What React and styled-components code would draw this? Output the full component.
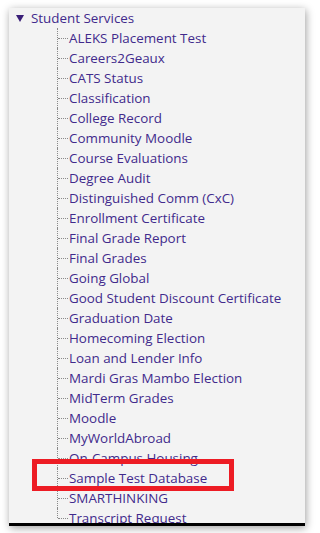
import React from "react";
import styled, { createGlobalStyle } from "styled-components";

const Global = createGlobalStyle`
  html, body { margin: 0; padding: 0; background: #ffffff; }
  body { font-family: "Open Sans", "Noto Sans", sans-serif; }
`;

const Page = styled.div`
  padding: 8px 8px 7px 9px;
  width: 313px;
  height: 533px;
  box-sizing: border-box;
`;

const Panel = styled.div`
  position: relative;
  width: 296px;
  height: 518px;
  box-sizing: border-box;
  background: #f3f3f3;
  border-bottom: 3px solid #000;
  box-shadow: 1px 2px 8px rgba(0, 0, 0, 0.38);
  overflow: hidden;
`;

const Header = styled.div`
  display: flex;
  align-items: center;
  height: 20px;
  padding-left: 7px;
  gap: 7px;
  color: #412a8c;
  font-size: 13.4px;
`;

const Triangle = styled.span`
  width: 0;
  height: 0;
  border-left: 4px solid transparent;
  border-right: 4px solid transparent;
  border-top: 7px solid #3a1f78;
  margin-top: 1px;
`;

const List = styled.ul`
  list-style: none;
  margin: 0 0 0 48px;
  padding: 0;
`;

const Item = styled.li`
  position: relative;
  height: 20px;
  line-height: 20px;
  padding-left: 12px;
  color: #412a8c;
  font-size: 13.4px;
  white-space: nowrap;

  &::before {
    content: "";
    position: absolute;
    left: 0;
    top: 0;
    height: ${(p) => (p.$last ? "10px" : "20px")};
    border-left: 1px dotted #8a8a8a;
  }

  &::after {
    content: "";
    position: absolute;
    left: 1px;
    top: 10px;
    width: 10px;
    border-top: 1px dotted #8a8a8a;
  }
`;

const Highlight = styled.div`
  position: absolute;
  left: -25px;
  top: -9px;
  width: 202px;
  height: 32px;
  box-sizing: border-box;
  border: 5px solid #ed1c24;
  pointer-events: none;
  z-index: 2;
`;

const items = [
  "ALEKS Placement Test",
  "Careers2Geaux",
  "CATS Status",
  "Classification",
  "College Record",
  "Community Moodle",
  "Course Evaluations",
  "Degree Audit",
  "Distinguished Comm (CxC)",
  "Enrollment Certificate",
  "Final Grade Report",
  "Final Grades",
  "Going Global",
  "Good Student Discount Certificate",
  "Graduation Date",
  "Homecoming Election",
  "Loan and Lender Info",
  "Mardi Gras Mambo Election",
  "MidTerm Grades",
  "Moodle",
  "MyWorldAbroad",
  "On-Campus Housing",
  "Sample Test Database",
  "SMARTHINKING",
  "Transcript Request",
];

export default function App() {
  return (
    <>
      <Global />
      <Page>
        <Panel>
          <Header>
            <Triangle />
            <span>Student Services</span>
          </Header>
          <List>
            {items.map((name, i) => (
              <Item key={name} $last={i === items.length - 1}>
                {name}
                {name === "Sample Test Database" && <Highlight />}
              </Item>
            ))}
          </List>
        </Panel>
      </Page>
    </>
  );
}
